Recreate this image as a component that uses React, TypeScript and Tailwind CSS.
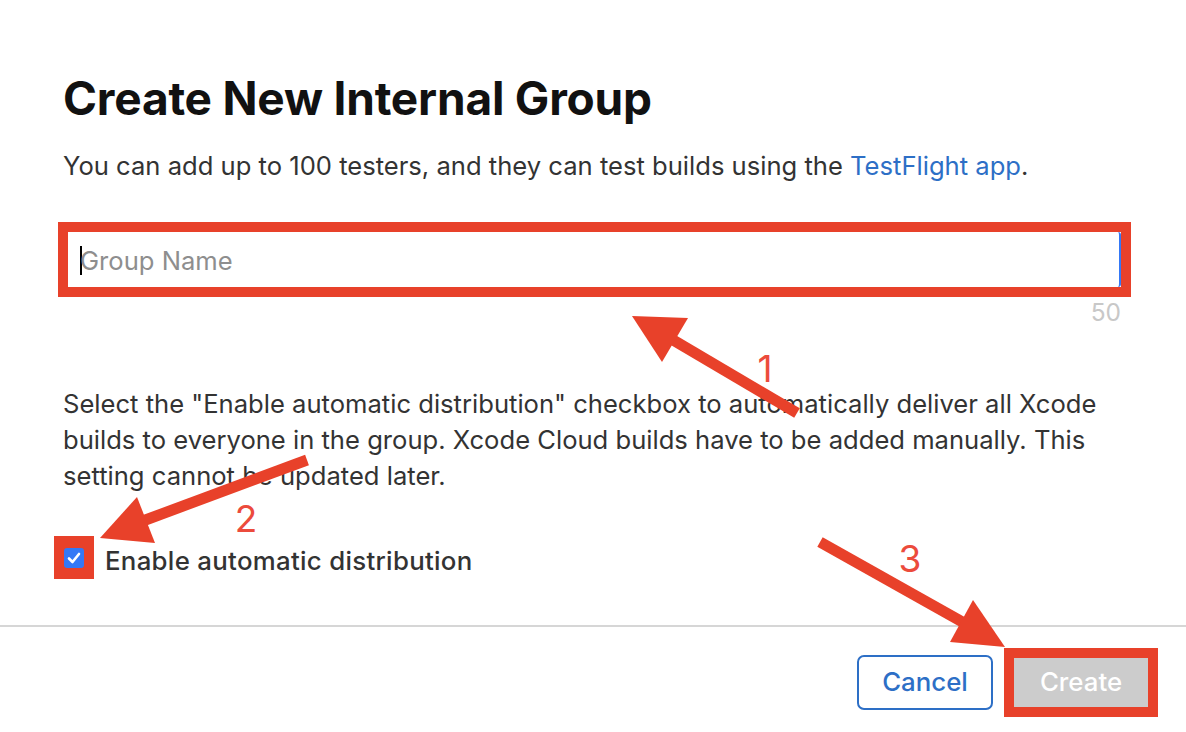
import React from "react";

export default function App() {
  return (
    <div
      className="relative w-[1186px] h-[732px] overflow-hidden bg-white"
      style={{ fontFamily: "Inter, 'Noto Sans', sans-serif" }}
    >
      <div className="pl-[63px] pr-[28px] pt-[75px]">
        <h1 className="text-[46px] leading-none font-bold text-[#111111] tracking-[-0.2px]">
          Create New Internal Group
        </h1>
        <p className="mt-[29px] text-[25.6px] leading-[32px] text-[#333333]">
          You can add up to 100 testers, and they can test builds using the{" "}
          <span className="text-[#2d6fc6]">TestFlight app</span>.
        </p>

        <div className="mt-[40px] ml-[-5px] w-[1073px] border-[10px] border-[#e8412a]">
          <div className="relative h-[55px] bg-white rounded-r-[3px] border-r-2 border-[#3478f6] flex items-center pl-[12px]">
            <span className="w-[2px] h-[29px] bg-black mt-[2px]" />
            <span className="text-[25.6px] text-[#8e8e8e] ml-[-2px] mt-[4px]">Group Name</span>
          </div>
        </div>
        <div className="w-[1058px] text-right text-[24.5px] leading-[28px] text-[#c8c8c8] mt-[1px]">
          50
        </div>

        <p className="mt-[60px] w-[1060px] text-[25.6px] leading-[36px] text-[#333333]">
          Select the "Enable automatic distribution" checkbox to automatically deliver all Xcode
          builds to everyone in the group. Xcode Cloud builds have to be added manually. This
          setting cannot be updated later.
        </p>

        <div className="mt-[41px] ml-[-9px] flex items-center">
          <div className="w-[40px] h-[43px] bg-[#e8412a] flex items-center justify-center">
            <div className="w-[20px] h-[20px] rounded-[3px] bg-[#3478f6] flex items-center justify-center">
              <svg width="16" height="16" viewBox="0 0 16 16">
                <path
                  d="M3 8.5 L6.5 12 L13 4"
                  fill="none"
                  stroke="white"
                  strokeWidth="2.6"
                  strokeLinecap="round"
                  strokeLinejoin="round"
                />
              </svg>
            </div>
          </div>
          <span className="ml-[11px] pt-[7px] text-[25.8px] font-medium tracking-[0.3px] text-[#333333]">
            Enable automatic distribution
          </span>
        </div>
      </div>

      <div className="mt-[44px] h-[2px] bg-[#d6d6d6]" />

      <div className="flex justify-end items-center pr-[28px] mt-[21px]">
        <button className="w-[136px] h-[55px] rounded-[7px] border-2 border-[#2d6fc6] text-[#2d6fc6] text-[25.8px] font-medium bg-white">
          Cancel
        </button>
        <div className="ml-[11px] w-[154px] h-[69px] border-[10px] border-[#e8412a]">
          <div className="w-full h-full bg-[#cccccc] text-white text-[25.8px] font-medium flex items-center justify-center">
            Create
          </div>
        </div>
      </div>

      <svg
        className="absolute inset-0 pointer-events-none"
        width="1186"
        height="732"
        viewBox="0 0 1186 732"
      >
        <g fill="#e8412a" stroke="#e8412a">
          <line x1="797" y1="413" x2="668" y2="337" strokeWidth="11" />
          <polygon points="632,316 688,318 662,362" stroke="none" />
          <line x1="307" y1="460" x2="140" y2="522" strokeWidth="11" />
          <polygon points="100,538 137,497 155,543" stroke="none" />
          <line x1="820" y1="542" x2="966" y2="624" strokeWidth="11" />
          <polygon points="1005,647 973,600 950,642" stroke="none" />
        </g>
        <g fill="#ec4b3c" fontSize="37" fontFamily="Inter, sans-serif" textAnchor="middle">
          <text x="765" y="382">1</text>
          <text x="246" y="532">2</text>
          <text x="910" y="572">3</text>
        </g>
      </svg>
    </div>
  );
}
